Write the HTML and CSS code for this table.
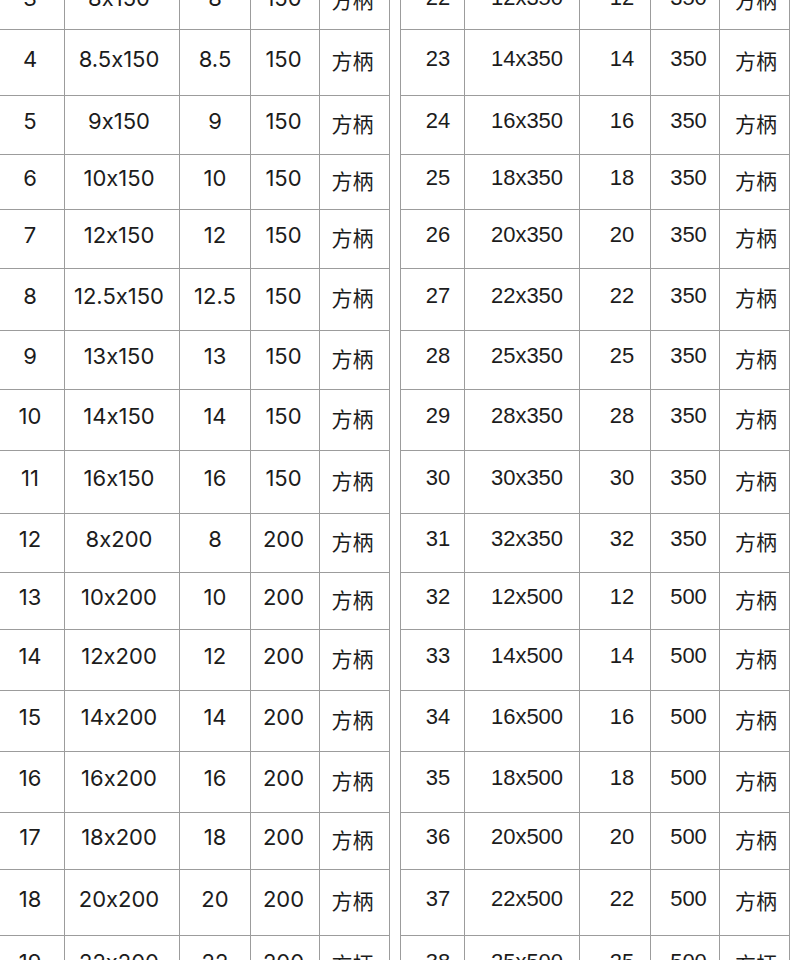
FILE: index.html
```html
<!DOCTYPE html>
<html lang="zh">
<head>
<meta charset="utf-8">
<title>规格表</title>
<link rel="stylesheet" href="styles.css">
</head>
<body>
<div class="page">
  <div class="sheet sheet-left">
    <div class="row"><div class="cell">3</div><div class="cell">8x150</div><div class="cell">8</div><div class="cell">150</div><div class="cell cn">方柄</div></div>
    <div class="row"><div class="cell">4</div><div class="cell">8.5x150</div><div class="cell">8.5</div><div class="cell">150</div><div class="cell cn">方柄</div></div>
    <div class="row"><div class="cell">5</div><div class="cell">9x150</div><div class="cell">9</div><div class="cell">150</div><div class="cell cn">方柄</div></div>
    <div class="row"><div class="cell">6</div><div class="cell">10x150</div><div class="cell">10</div><div class="cell">150</div><div class="cell cn">方柄</div></div>
    <div class="row"><div class="cell">7</div><div class="cell">12x150</div><div class="cell">12</div><div class="cell">150</div><div class="cell cn">方柄</div></div>
    <div class="row"><div class="cell">8</div><div class="cell">12.5x150</div><div class="cell">12.5</div><div class="cell">150</div><div class="cell cn">方柄</div></div>
    <div class="row"><div class="cell">9</div><div class="cell">13x150</div><div class="cell">13</div><div class="cell">150</div><div class="cell cn">方柄</div></div>
    <div class="row"><div class="cell">10</div><div class="cell">14x150</div><div class="cell">14</div><div class="cell">150</div><div class="cell cn">方柄</div></div>
    <div class="row"><div class="cell">11</div><div class="cell">16x150</div><div class="cell">16</div><div class="cell">150</div><div class="cell cn">方柄</div></div>
    <div class="row"><div class="cell">12</div><div class="cell">8x200</div><div class="cell">8</div><div class="cell">200</div><div class="cell cn">方柄</div></div>
    <div class="row"><div class="cell">13</div><div class="cell">10x200</div><div class="cell">10</div><div class="cell">200</div><div class="cell cn">方柄</div></div>
    <div class="row"><div class="cell">14</div><div class="cell">12x200</div><div class="cell">12</div><div class="cell">200</div><div class="cell cn">方柄</div></div>
    <div class="row"><div class="cell">15</div><div class="cell">14x200</div><div class="cell">14</div><div class="cell">200</div><div class="cell cn">方柄</div></div>
    <div class="row"><div class="cell">16</div><div class="cell">16x200</div><div class="cell">16</div><div class="cell">200</div><div class="cell cn">方柄</div></div>
    <div class="row"><div class="cell">17</div><div class="cell">18x200</div><div class="cell">18</div><div class="cell">200</div><div class="cell cn">方柄</div></div>
    <div class="row"><div class="cell">18</div><div class="cell">20x200</div><div class="cell">20</div><div class="cell">200</div><div class="cell cn">方柄</div></div>
    <div class="row"><div class="cell">19</div><div class="cell">22x200</div><div class="cell">22</div><div class="cell">200</div><div class="cell cn">方柄</div></div>
  </div>
  <div class="sheet sheet-right">
    <div class="row"><div class="cell">22</div><div class="cell">12x350</div><div class="cell">12</div><div class="cell">350</div><div class="cell cn">方柄</div></div>
    <div class="row"><div class="cell">23</div><div class="cell">14x350</div><div class="cell">14</div><div class="cell">350</div><div class="cell cn">方柄</div></div>
    <div class="row"><div class="cell">24</div><div class="cell">16x350</div><div class="cell">16</div><div class="cell">350</div><div class="cell cn">方柄</div></div>
    <div class="row"><div class="cell">25</div><div class="cell">18x350</div><div class="cell">18</div><div class="cell">350</div><div class="cell cn">方柄</div></div>
    <div class="row"><div class="cell">26</div><div class="cell">20x350</div><div class="cell">20</div><div class="cell">350</div><div class="cell cn">方柄</div></div>
    <div class="row"><div class="cell">27</div><div class="cell">22x350</div><div class="cell">22</div><div class="cell">350</div><div class="cell cn">方柄</div></div>
    <div class="row"><div class="cell">28</div><div class="cell">25x350</div><div class="cell">25</div><div class="cell">350</div><div class="cell cn">方柄</div></div>
    <div class="row"><div class="cell">29</div><div class="cell">28x350</div><div class="cell">28</div><div class="cell">350</div><div class="cell cn">方柄</div></div>
    <div class="row"><div class="cell">30</div><div class="cell">30x350</div><div class="cell">30</div><div class="cell">350</div><div class="cell cn">方柄</div></div>
    <div class="row"><div class="cell">31</div><div class="cell">32x350</div><div class="cell">32</div><div class="cell">350</div><div class="cell cn">方柄</div></div>
    <div class="row"><div class="cell">32</div><div class="cell">12x500</div><div class="cell">12</div><div class="cell">500</div><div class="cell cn">方柄</div></div>
    <div class="row"><div class="cell">33</div><div class="cell">14x500</div><div class="cell">14</div><div class="cell">500</div><div class="cell cn">方柄</div></div>
    <div class="row"><div class="cell">34</div><div class="cell">16x500</div><div class="cell">16</div><div class="cell">500</div><div class="cell cn">方柄</div></div>
    <div class="row"><div class="cell">35</div><div class="cell">18x500</div><div class="cell">18</div><div class="cell">500</div><div class="cell cn">方柄</div></div>
    <div class="row"><div class="cell">36</div><div class="cell">20x500</div><div class="cell">20</div><div class="cell">500</div><div class="cell cn">方柄</div></div>
    <div class="row"><div class="cell">37</div><div class="cell">22x500</div><div class="cell">22</div><div class="cell">500</div><div class="cell cn">方柄</div></div>
    <div class="row"><div class="cell">38</div><div class="cell">25x500</div><div class="cell">25</div><div class="cell">500</div><div class="cell cn">方柄</div></div>
  </div>
</div>
</body>
</html>
```
FILE: styles.css
```css
html, body {
  margin: 0;
  padding: 0;
  background: #ffffff;
  overflow: hidden;
}

.page {
  display: flex;
  gap: 10px;
  margin-top: -26px;
  width: 790px;
}

.sheet {
  display: flex;
  flex-direction: column;
  width: 390px;
  box-sizing: border-box;
  color: #1c1c1c;
  font-size: 22px;
}

.sheet-left {
  font-family: Inter, "Noto Sans", sans-serif;
  font-feature-settings: "calt" 0;
}

.sheet-right {
  font-family: "Liberation Sans", Arial, sans-serif;
  border-left: 1px solid #9c9c9c;
}

.row {
  display: grid;
  box-sizing: border-box;
}

.sheet-left .row {
  grid-template-columns: 65px 115px 71px 69px 70px;
}

.sheet-right .row {
  grid-template-columns: 64px 115px 71px 69px 70px;
}

.row:nth-child(1) { height: 56px; }
.row:nth-child(2) { height: 66px; }
.row:nth-child(3) { height: 59px; }
.row:nth-child(4) { height: 55px; }
.row:nth-child(5) { height: 59px; }
.row:nth-child(6) { height: 62px; }
.row:nth-child(7) { height: 59px; }
.row:nth-child(8) { height: 61px; }
.row:nth-child(9) { height: 63px; }
.row:nth-child(10) { height: 59px; }
.row:nth-child(11) { height: 57px; }
.row:nth-child(12) { height: 61px; }
.row:nth-child(13) { height: 61px; }
.row:nth-child(14) { height: 61px; }
.row:nth-child(15) { height: 57px; }
.row:nth-child(16) { height: 66px; }
.row:nth-child(17) { height: 60px; }

.cell {
  box-sizing: border-box;
  border-right: 1px solid #9c9c9c;
  border-bottom: 1px solid #9c9c9c;
  display: flex;
  align-items: center;
  justify-content: center;
  white-space: nowrap;
  line-height: 1;
  padding-bottom: 8px;
}

.cn {
  font-family: "Noto Sans CJK SC", sans-serif;
  font-size: 21px;
  padding-bottom: 4px;
}

.sheet-left .cell:nth-child(1) { padding-right: 4px; }
.sheet-left .cell:nth-child(2) { padding-right: 6px; }
.sheet-left .cell:nth-child(4) { padding-right: 3px; }
.sheet-left .cell:nth-child(5) { padding-right: 4px; }

.sheet-right .cell:nth-child(1) { padding-left: 11px; }
.sheet-right .cell:nth-child(2) { padding-left: 10px; }
.sheet-right .cell:nth-child(3) { padding-left: 14px; }
.sheet-right .cell:nth-child(4) { padding-left: 7px; }
.sheet-right .cell:nth-child(5) { padding-left: 3px; }
```
